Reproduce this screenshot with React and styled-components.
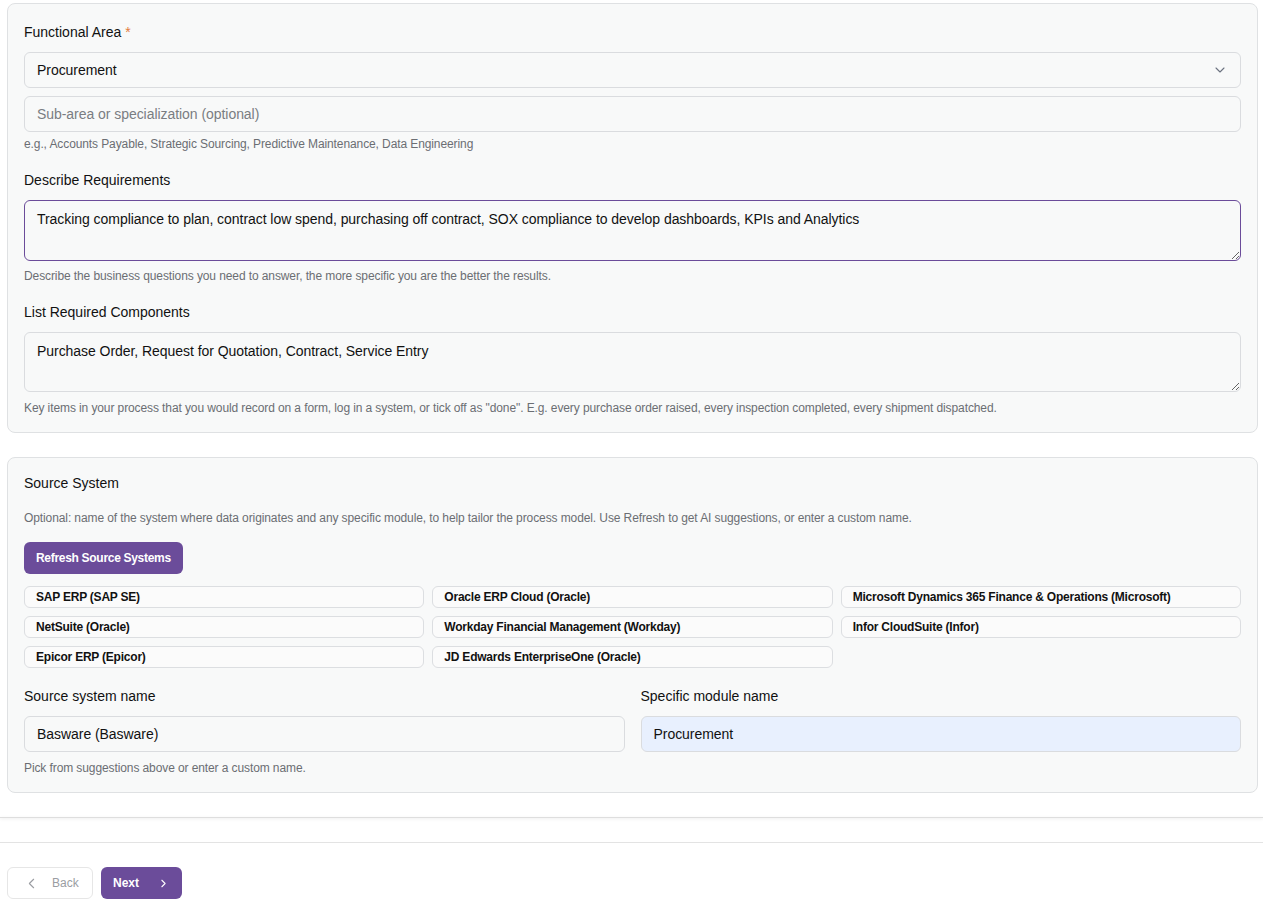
import React from "react";
import styled, { createGlobalStyle } from "styled-components";
import { ChevronDown, ChevronLeft, ChevronRight } from "lucide-react";

const purple = "#6b4c9a";

const GlobalStyle = createGlobalStyle`
  * { box-sizing: border-box; }
  body {
    margin: 0;
    background: #ffffff;
    font-family: "Liberation Sans", Arial, sans-serif;
    color: #111;
  }
`;

const suggestions = [
  "SAP ERP (SAP SE)",
  "Oracle ERP Cloud (Oracle)",
  "Microsoft Dynamics 365 Finance & Operations (Microsoft)",
  "NetSuite (Oracle)",
  "Workday Financial Management (Workday)",
  "Infor CloudSuite (Infor)",
  "Epicor ERP (Epicor)",
  "JD Edwards EnterpriseOne (Oracle)",
];

const App = () => (
  <Page>
    <GlobalStyle />
    <Card>
      <Field>
        <Label>
          Functional Area <Required>*</Required>
        </Label>
        <SelectBox>
          <span>Procurement</span>
          <ChevronDown size={16} color="#6b7280" strokeWidth={1.6} />
        </SelectBox>
        <Input placeholder="Sub-area or specialization (optional)" />
        <Help>e.g., Accounts Payable, Strategic Sourcing, Predictive Maintenance, Data Engineering</Help>
      </Field>

      <Field>
        <Label>Describe Requirements</Label>
        <TextArea
          $focused
          defaultValue="Tracking compliance to plan, contract low spend, purchasing off contract, SOX compliance to develop dashboards, KPIs and Analytics"
        />
        <Help>Describe the business questions you need to answer, the more specific you are the better the results.</Help>
      </Field>

      <Field>
        <Label>List Required Components</Label>
        <TextArea defaultValue="Purchase Order, Request for Quotation, Contract, Service Entry" />
        <Help $mt={5}>
          Key items in your process that you would record on a form, log in a system, or tick off as "done". E.g. every
          purchase order raised, every inspection completed, every shipment dispatched.
        </Help>
      </Field>
    </Card>

    <Card $top={15} $gap={0}>
      <Label>Source System</Label>
      <Intro>
        Optional: name of the system where data originates and any specific module, to help tailor the process model.
        Use Refresh to get AI suggestions, or enter a custom name.
      </Intro>
      <PrimaryButton>Refresh Source Systems</PrimaryButton>
      <ChipGrid>
        {suggestions.map((s) => (
          <Chip key={s}>{s}</Chip>
        ))}
      </ChipGrid>
      <TwoCol>
        <Field>
          <Label>Source system name</Label>
          <Input defaultValue="Basware (Basware)" />
          <Help $mt={8}>Pick from suggestions above or enter a custom name.</Help>
        </Field>
        <Field>
          <Label>Specific module name</Label>
          <Input $autofill defaultValue="Procurement" />
        </Field>
      </TwoCol>
    </Card>

    <ScrollEdge />
    <Footer>
      <BackButton>
        <ChevronLeft size={17} strokeWidth={1.5} />
        Back
      </BackButton>
      <NextButton>
        Next
        <ChevronRight size={17} strokeWidth={2} />
      </NextButton>
    </Footer>
  </Page>
);

const Page = styled.div`
  padding: 3px 5px 0 7px;
  display: flex;
  flex-direction: column;
  gap: 24px;
`;

const Card = styled.section`
  background: #f8f9f9;
  border: 1px solid #dfe1e3;
  border-radius: 8px;
  padding: ${(p) => p.$top ?? 18}px 16px 16px 16px;
  display: flex;
  flex-direction: column;
  gap: ${(p) => p.$gap ?? 18}px;
`;

const Field = styled.div`
  display: flex;
  flex-direction: column;
`;

const Label = styled.label`
  font-size: 14px;
  font-weight: 500;
  line-height: 20px;
  color: #111;
  margin-bottom: 10px;
`;

const Required = styled.span`
  color: #e37b3e;
`;

const controlBase = `
  width: 100%;
  border: 1px solid #dadcdf;
  border-radius: 6px;
  font-family: "Liberation Sans", Arial, sans-serif;
  font-size: 14px;
  letter-spacing: -0.05px;
  color: #111;
  padding: 0 12px;
  outline: none;
`;

const SelectBox = styled.div`
  ${controlBase}
  height: 36px;
  background: #f8f9f9;
  display: flex;
  align-items: center;
  justify-content: space-between;
  margin-bottom: 8px;
`;

const Input = styled.input`
  ${controlBase}
  height: 36px;
  background: ${(p) => (p.$autofill ? "#e8f0fe" : "#f8f9f9")};
  &::placeholder {
    color: #7a7d82;
  }
`;

const TextArea = styled.textarea`
  ${controlBase}
  display: block;
  height: ${(p) => (p.$focused ? 61 : 60)}px;
  margin-bottom: 3px;
  padding: 9px 12px;
  line-height: 18px;
  resize: vertical;
  background: #f8f9f9;
  border-color: ${(p) => (p.$focused ? purple : "#dadcdf")};
`;

const Help = styled.p`
  margin: ${(p) => p.$mt ?? 4}px 0 0;
  font-size: 12px;
  line-height: 16px;
  letter-spacing: -0.1px;
  color: #6b6e73;
`;

const Intro = styled.p`
  margin: 7px 0 16px;
  font-size: 12px;
  line-height: 16px;
  letter-spacing: -0.1px;
  color: #6b6e73;
`;

const PrimaryButton = styled.button`
  align-self: flex-start;
  height: 32px;
  padding: 0 12px;
  border: none;
  border-radius: 6px;
  background: ${purple};
  color: #fff;
  font-family: "Liberation Sans", Arial, sans-serif;
  font-size: 12px;
  font-weight: 700;
  letter-spacing: -0.3px;
`;

const ChipGrid = styled.div`
  display: grid;
  grid-template-columns: repeat(3, 1fr);
  gap: 8px;
  margin: 12px 0 18px;
`;

const Chip = styled.div`
  height: 22px;
  border: 1px solid #dcdee1;
  border-radius: 6px;
  background: #fbfbfb;
  padding: 0 11px;
  display: flex;
  align-items: center;
  font-size: 12px;
  font-weight: 700;
  letter-spacing: -0.22px;
  color: #111;
  white-space: nowrap;
`;

const TwoCol = styled.div`
  display: grid;
  grid-template-columns: 1fr 1fr;
  gap: 16px;
`;

const ScrollEdge = styled.div`
  height: 1px;
  margin: 0 -5px 0 -7px;
  background: #dedede;
  box-shadow: 0 1px 3px rgba(0, 0, 0, 0.12);
`;

const Footer = styled.div`
  display: flex;
  gap: 8px;
  margin: 0 -5px 0 -7px;
  padding: 24px 7px 0;
  border-top: 1px solid #e3e3e3;
`;

const BackButton = styled.button`
  width: 86px;
  height: 32px;
  border: 1px solid #e6e6e6;
  border-radius: 6px;
  background: #fff;
  color: #9a9da2;
  font-family: "Liberation Sans", Arial, sans-serif;
  font-size: 12px;
  display: flex;
  align-items: center;
  gap: 12px;
  padding: 0 0 0 15px;
`;

const NextButton = styled.button`
  width: 81px;
  height: 32px;
  border: none;
  border-radius: 6px;
  background: ${purple};
  color: #fff;
  font-family: "Liberation Sans", Arial, sans-serif;
  font-size: 12px;
  font-weight: 700;
  display: flex;
  align-items: center;
  gap: 18px;
  padding: 0 12px;
`;

export default App;
